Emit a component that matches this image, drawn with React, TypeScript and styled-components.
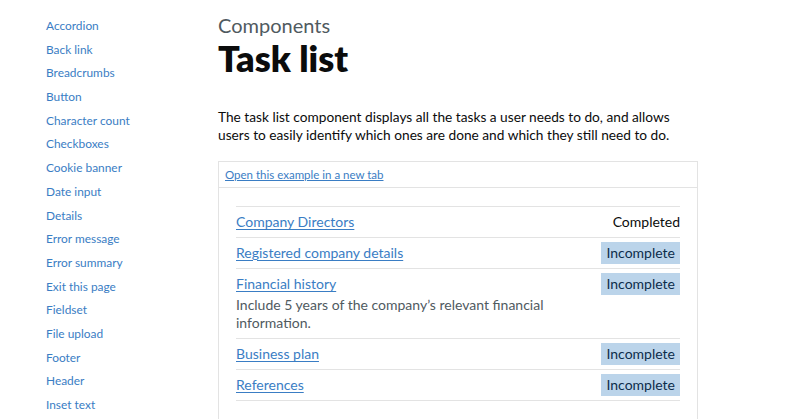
import styled, { createGlobalStyle } from "styled-components";

const GlobalStyle = createGlobalStyle`
  body {
    margin: 0;
    background: #ffffff;
    font-family: Lato, "Noto Sans", Arial, sans-serif;
    color: #0b0c0c;
  }
`;

const Page = styled.div`
  display: flex;
  width: 800px;
  height: 419px;
  overflow: hidden;
`;

const Sidebar = styled.nav`
  width: 172px;
  padding: 14px 0 0 46px;
  flex-shrink: 0;
`;

const NavList = styled.ul`
  list-style: none;
  margin: 0;
  padding: 0;
`;

const NavItem = styled.li`
  height: 23.7px;
  line-height: 20px;
`;

const NavLink = styled.a`
  font-size: 11.9px;
  color: #3a7dc4;
  text-decoration: none;
`;

const Main = styled.main`
  width: 480px;
  padding-top: 12px;
`;

const Caption = styled.span`
  display: block;
  font-size: 20px;
  line-height: 26px;
  color: #505a5f;
`;

const Title = styled.h1`
  margin: 0 0 30px;
  font-size: 36px;
  line-height: 40px;
  font-weight: 800;
`;

const Lead = styled.p`
  margin: 0 0 17px;
  font-size: 13.7px;
  line-height: 18px;
`;

const Example = styled.div`
  border: 1px solid #e3e3e3;
  border-bottom: none;
`;

const ExampleHeader = styled.div`
  padding: 5px 6px 4px;
  font-size: 12px;
  line-height: 16px;
  border-bottom: 1px solid #e3e3e3;
`;

const SmallLink = styled.a`
  font-size: 11.5px;
  color: #3a7dc4;
  text-decoration: underline;
`;

const ExampleBody = styled.div`
  padding: 18px 17px 30px;
`;

const TaskList = styled.ul`
  list-style: none;
  margin: 0;
  padding: 0;
  border-top: 1px solid #e3e3e3;
`;

const Task = styled.li`
  display: flex;
  justify-content: space-between;
  align-items: flex-start;
  gap: 20px;
  padding: 4px 0;
  border-bottom: 1px solid #e3e3e3;
`;

const TaskName = styled.div`
  display: flex;
  flex-direction: column;
  font-size: 14px;
  line-height: 22px;
`;

const TaskLink = styled.a`
  color: #3a7dc4;
  text-decoration: underline;
  text-underline-offset: 2px;
`;

const Hint = styled.div`
  margin: 1px 0 2px;
  font-size: 14px;
  line-height: 18px;
  color: #505a5f;
  max-width: 320px;
`;

const Status = styled.span<{ $tag?: boolean }>`
  flex-shrink: 0;
  font-size: 14px;
  line-height: 22px;
  color: ${(p) => (p.$tag ? "#0c2d4a" : "#0b0c0c")};
  background: ${(p) => (p.$tag ? "#bbd4ea" : "transparent")};
  padding: ${(p) => (p.$tag ? "0 5px" : "0")};
`;

const navItems = [
  "Accordion",
  "Back link",
  "Breadcrumbs",
  "Button",
  "Character count",
  "Checkboxes",
  "Cookie banner",
  "Date input",
  "Details",
  "Error message",
  "Error summary",
  "Exit this page",
  "Fieldset",
  "File upload",
  "Footer",
  "Header",
  "Inset text",
];

const tasks = [
  { name: "Company Directors", status: "Completed", done: true },
  { name: "Registered company details", status: "Incomplete" },
  {
    name: "Financial history",
    status: "Incomplete",
    hint: "Include 5 years of the company’s relevant financial information.",
  },
  { name: "Business plan", status: "Incomplete" },
  { name: "References", status: "Incomplete" },
];

export default function App() {
  return (
    <Page>
      <GlobalStyle />
      <Sidebar>
        <NavList>
          {navItems.map((item) => (
            <NavItem key={item}>
              <NavLink href="#">{item}</NavLink>
            </NavItem>
          ))}
        </NavList>
      </Sidebar>
      <Main>
        <Caption>Components</Caption>
        <Title>Task list</Title>
        <Lead>
          The task list component displays all the tasks a user needs to do, and allows users to easily identify which
          ones are done and which they still need to do.
        </Lead>
        <Example>
          <ExampleHeader>
            <SmallLink href="#">Open this example in a new tab</SmallLink>
          </ExampleHeader>
          <ExampleBody>
            <TaskList>
              {tasks.map((t) => (
                <Task key={t.name}>
                  <TaskName>
                    <TaskLink href="#">{t.name}</TaskLink>
                    {t.hint && <Hint>{t.hint}</Hint>}
                  </TaskName>
                  <Status $tag={!t.done}>{t.status}</Status>
                </Task>
              ))}
            </TaskList>
          </ExampleBody>
        </Example>
      </Main>
    </Page>
  );
}
